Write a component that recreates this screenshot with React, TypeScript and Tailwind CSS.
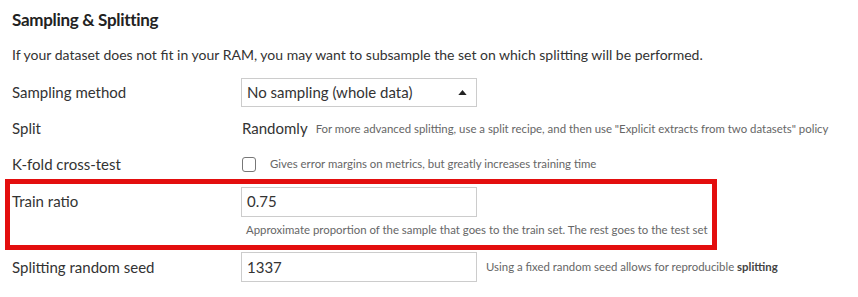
export default function App() {
  return (
    <div className="w-[858px] h-[297px] bg-white text-[#333] font-['Lato','Open_Sans',sans-serif] overflow-hidden">
      <div className="pl-3 pt-[7px]">
        <h2 className="text-[17px] tracking-[-0.3px] font-bold leading-[26px] text-[#222]">Sampling &amp; Splitting</h2>
        <p className="mt-[12px] text-[14px] leading-[20px]">
          If your dataset does not fit in your RAM, you may want to subsample the set on which splitting will be performed.
        </p>

        <div className="mt-[13px] flex items-center h-[29px]">
          <div className="w-[229px] text-[15px]">Sampling method</div>
          <div className="w-[236px] h-[29px] border border-[#ccc] flex items-center justify-between px-[5px] text-[15px]">
            <span>No sampling (whole data)</span>
            <svg width="9" height="5" viewBox="0 0 10 6" className="mr-[4px]">
              <path d="M0 6 L5 0 L10 6 Z" fill="#222" />
            </svg>
          </div>
        </div>

        <div className="mt-[8px] flex items-center h-[27px]">
          <div className="w-[230px] text-[15px]">Split</div>
          <span className="text-[15px]">Randomly</span>
          <span className="ml-[8px] text-[11.4px] text-[#666]">
            For more advanced splitting, use a split recipe, and then use "Explicit extracts from two datasets" policy
          </span>
        </div>

        <div className="mt-[8px] flex items-center h-[28px]">
          <div className="w-[230px] text-[15px]">K-fold cross-test</div>
          <div className="w-[14px] h-[15px] border border-[#777] rounded-[3px]" />
          <span className="ml-[14px] text-[11.4px] text-[#666]">Gives error margins on metrics, but greatly increases training time</span>
        </div>

        <div className="mt-[1px] -ml-[7px] w-[712px] border-[5px] border-[#e30e0e] pl-[2px] pt-[3px] pb-[7px]">
          <div className="flex items-center h-[29px]">
            <div className="w-[229px] text-[15px]">Train ratio</div>
            <div className="w-[236px] h-[30px] border border-[#ccc] flex items-center px-[5px] text-[15px]">0.75</div>
          </div>
          <div className="ml-[234px] mt-[6px] text-[11.4px] text-[#666] leading-[16px]">
            Approximate proportion of the sample that goes to the train set. The rest goes to the test set
          </div>
        </div>

        <div className="mt-[2px] flex items-center h-[30px]">
          <div className="w-[229px] text-[15px]">Splitting random seed</div>
          <div className="w-[236px] h-[30px] border border-[#ccc] flex items-center px-[5px] text-[15px]">1337</div>
          <span className="ml-[9px] text-[11.4px] text-[#666]">
            Using a fixed random seed allows for reproducible <b className="text-[#444]">splitting</b>
          </span>
        </div>
      </div>
    </div>
  );
}
